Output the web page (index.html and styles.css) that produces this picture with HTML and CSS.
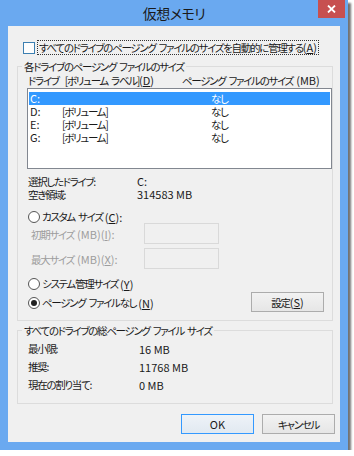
FILE: index.html
```html
<!DOCTYPE html>
<html lang="ja">
<head>
    <meta charset="UTF-8">
    <title>仮想メモリ</title>
    <link rel="stylesheet" href="styles.css">
</head>
<body>
    <div class="window">
        <div class="titlebar">
            <span></span>
            <span class="title">仮想メモリ</span>
            <span class="close">
                <svg width="9" height="8" viewBox="0 0 9 8"><path d="M1 0.5 L8 7.5 M8 0.5 L1 7.5" stroke="#fff" stroke-width="1.8"/></svg>
            </span>
        </div>
        <div class="client">
            <div class="auto-row">
                <span class="checkbox"></span>
                <span class="focus">すべてのドライブのページング ファイルのサイズを自動的に管理する<span class="lat">(<u>A</u>)</span></span>
            </div>

            <fieldset class="group group-drives">
                <legend>各ドライブのページング ファイルのサイズ</legend>
                <div class="list-head">
                    <span class="col-drive">ドライブ&nbsp;&nbsp;[ボリューム ラベル]<span class="lat">(<u>D</u>)</span></span>
                    <span class="col-size">ページング ファイルのサイズ <span class="lat">(MB)</span></span>
                </div>
                <div class="listbox">
                    <div class="list-row selected"><span class="c1 lat">C:</span><span class="c2"></span><span class="c3">なし</span></div>
                    <div class="list-row"><span class="c1 lat">D:</span><span class="c2">[ボリューム]</span><span class="c3">なし</span></div>
                    <div class="list-row"><span class="c1 lat">E:</span><span class="c2">[ボリューム]</span><span class="c3">なし</span></div>
                    <div class="list-row"><span class="c1 lat">G:</span><span class="c2">[ボリューム]</span><span class="c3">なし</span></div>
                </div>

                <div class="info">
                    <span>選択したドライブ:</span><span class="lat">C:</span>
                    <span>空き領域:</span><span class="lat">314583 MB</span>
                </div>

                <div class="radio-row custom"><span class="radio"></span>カスタム サイズ<span class="lat">(<u>C</u>):</span></div>
                <div class="size-row first">
                    <span class="size-label">初期サイズ <span class="lat">(MB)(<u>I</u>):</span></span>
                    <span class="size-input"></span>
                </div>
                <div class="size-row">
                    <span class="size-label">最大サイズ <span class="lat">(MB)(<u>X</u>):</span></span>
                    <span class="size-input"></span>
                </div>

                <div class="options">
                    <div class="option-list">
                        <div class="radio-row"><span class="radio"></span>システム管理サイズ<span class="lat">(<u>Y</u>)</span></div>
                        <div class="radio-row"><span class="radio checked"></span>ページング ファイルなし<span class="lat">(<u>N</u>)</span></div>
                    </div>
                    <span class="button set-button">設定<span class="lat">(<u>S</u>)</span></span>
                </div>
            </fieldset>

            <fieldset class="group group-total">
                <legend>すべてのドライブの総ページング ファイル サイズ</legend>
                <div class="totals">
                    <span>最小限:</span><span class="lat">16 MB</span>
                    <span>推奨:</span><span class="lat">11768 MB</span>
                    <span>現在の割り当て:</span><span class="lat">0 MB</span>
                </div>
            </fieldset>

            <div class="buttons">
                <span class="button default lat">OK</span>
                <span class="button">キャンセル</span>
            </div>
        </div>
    </div>
</body>
</html>
```

FILE: styles.css
```css
html, body {
    margin: 0;
    padding: 0;
    background: #fff;
}
body {
    font-family: "Noto Sans CJK JP", "Noto Sans", sans-serif;
    font-size: 10.5px;
    letter-spacing: -1.3px;
    word-spacing: 2px;
    font-feature-settings: "palt";
    color: #1a1a1a;
    white-space: nowrap;
}
.lat {
    letter-spacing: 0;
    word-spacing: 0;
    font-size: 11px;
}
u {
    text-decoration-thickness: 1px;
    text-underline-offset: 1px;
}
.window {
    width: 348px;
    height: 450px;
    box-sizing: border-box;
    background: #6aa9f0;
    padding: 0 8px 8px 8px;
    display: flex;
    flex-direction: column;
    box-shadow: 3px 3px 2px rgba(0, 0, 0, 0.55);
}
.titlebar {
    height: 26px;
    display: grid;
    grid-template-columns: 1fr auto 1fr;
    align-items: start;
}
.title {
    font-size: 14px;
    letter-spacing: -0.5px;
    line-height: 26px;
    color: #1a1a1a;
}
.close {
    justify-self: end;
    margin-right: -5px;
    width: 27px;
    height: 18px;
    background: #c75050;
    display: flex;
    align-items: center;
    justify-content: center;
}
.client {
    flex: 1;
    background: #f0f0f0;
    display: flex;
    flex-direction: column;
}
.auto-row {
    display: flex;
    align-items: center;
    gap: 3px;
    height: 13px;
    margin: 15px 0 0 15px;
}
.checkbox {
    width: 10px;
    height: 10px;
    border: 1px solid #3c7fb1;
    background: #fdfdfd;
}
.focus {
    outline: 1px dotted #333;
    line-height: 13px;
    padding: 0 1px;
}
.group {
    margin: 0 0 0 9px;
    padding: 0 0 8px 0;
    width: 316px;
    box-sizing: border-box;
    border: 1px solid #dcdcdc;
    min-width: 0;
}
.group legend {
    line-height: 13px;
    padding: 0 2px;
    margin-left: 4px;
}
.group-drives {
    margin-top: 6px;
}
.list-head {
    display: flex;
    line-height: 13px;
    margin: 1px 0 0 10px;
}
.col-drive {
    width: 154px;
}
.listbox {
    margin: 1px 0 0 9px;
    width: 305px;
    height: 81px;
    box-sizing: border-box;
    border: 1px solid #828790;
    background: #fff;
    padding: 3px 1px 0 1px;
}
.list-row {
    display: flex;
    height: 13px;
    line-height: 13px;
    padding-left: 1px;
}
.list-row.selected {
    background: #3399ff;
    color: #fff;
}
.c1 {
    width: 32px;
}
.c2 {
    width: 149px;
}
.info, .totals {
    display: grid;
    grid-template-columns: 109px auto;
    line-height: 13px;
    margin: 6px 0 0 10px;
}
.radio-row {
    display: flex;
    align-items: center;
    gap: 2px;
    height: 12px;
    line-height: 12px;
    margin-left: 10px;
}
.radio-row.custom {
    margin-top: 10px;
}
.radio {
    width: 10px;
    height: 10px;
    border: 1px solid #555;
    border-radius: 50%;
    background: #fff;
    display: flex;
    align-items: center;
    justify-content: center;
}
.radio.checked::after {
    content: "";
    width: 6px;
    height: 6px;
    border-radius: 50%;
    background: #222;
}
.size-row {
    display: flex;
    align-items: center;
    height: 21px;
    margin: 4px 0 0 13px;
}
.size-row.first {
    margin-top: 0;
}
.size-label {
    width: 113px;
    color: #9d9d9d;
}
.size-input {
    width: 75px;
    height: 21px;
    box-sizing: border-box;
    border: 1px solid #d9d9d9;
    background: #f0f0f0;
}
.options {
    display: flex;
    align-items: flex-start;
    margin-top: 9px;
}
.option-list {
    display: flex;
    flex-direction: column;
    gap: 7px;
    width: 233px;
}
.button {
    width: 73px;
    height: 20px;
    box-sizing: border-box;
    border: 1px solid #acacac;
    background: linear-gradient(#f2f2f2, #e6e6e6);
    display: flex;
    align-items: center;
    justify-content: center;
}
.set-button {
    margin-top: 14px;
}
.group-total {
    margin-top: 3px;
    padding-bottom: 9px;
}
.totals {
    grid-template-columns: 111px auto;
    line-height: 18px;
    margin-top: 3px;
}
.buttons {
    display: flex;
    justify-content: flex-end;
    gap: 8px;
    margin: 10px 5px 0 0;
}
.button.default {
    border-color: #3399ff;
    background: linear-gradient(#eef3f8, #e1e9f1);
}
```
